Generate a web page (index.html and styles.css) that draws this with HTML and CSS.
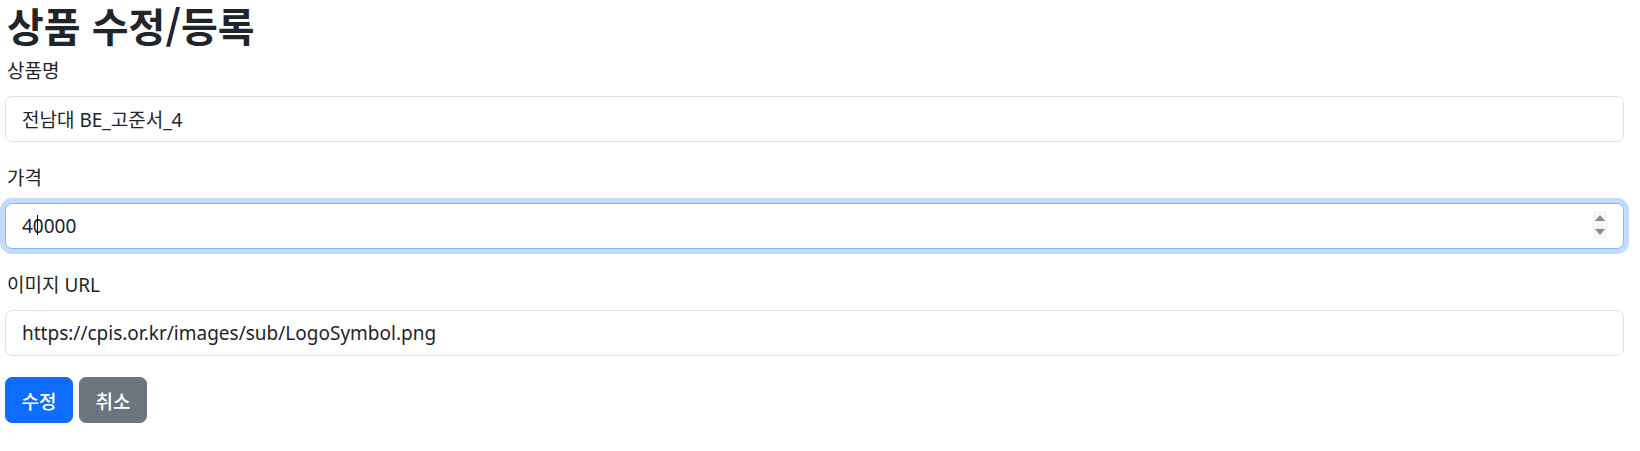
FILE: index.html
```html
<!DOCTYPE html>
<html lang="ko">
<head>
<meta charset="utf-8">
<title>상품 수정/등록</title>
<link rel="stylesheet" href="styles.css">
</head>
<body>
<div class="page">
  <h1 class="title">상품 수정/등록</h1>
  <form class="form">
    <div class="group">
      <label class="label" for="name">상품명</label>
      <input class="control" id="name" type="text" value="전남대 BE_고준서_4">
    </div>
    <div class="group">
      <label class="label" for="price">가격</label>
      <div class="field-wrap">
        <input class="control focused" id="price" type="text" value="40000">
        <span class="caret"></span>
        <span class="spinner">
          <svg width="12" height="28" viewBox="0 0 12 28">
            <polygon points="6,4 11,10 1,10" fill="#8c8c8c"/>
            <polygon points="6,24 11,18 1,18" fill="#8c8c8c"/>
          </svg>
        </span>
      </div>
    </div>
    <div class="group">
      <label class="label" for="img">이미지 URL</label>
      <input class="control" id="img" type="text" value="https://cpis.or.kr/images/sub/LogoSymbol.png">
    </div>
    <div class="actions">
      <button type="button" class="btn btn-primary">수정</button>
      <button type="button" class="btn btn-secondary">취소</button>
    </div>
  </form>
</div>
</body>
</html>
```
FILE: styles.css
```css
* { box-sizing: border-box; }
html, body { margin: 0; padding: 0; background: #fff; }
body {
  font-family: "Noto Sans", "Noto Sans CJK KR", sans-serif;
  color: #212529;
}
.page {
  padding: 0 16px 0 5px;
}
.title {
  margin: 0 0 9px 2px;
  font-size: 40px;
  line-height: 48px;
  height: 48px;
  padding-top: 1px;
  font-weight: 700;
  font-family: "Noto Sans CJK KR", "Noto Sans", sans-serif;
}
.form { display: flex; flex-direction: column; }
.group { display: flex; flex-direction: column; margin-bottom: 22px; }
.label {
  display: block;
  font-size: 19px;
  line-height: 29px;
  margin: 0 0 10px 2px;
}
.field-wrap { position: relative; }
.control {
  display: block;
  width: 100%;
  height: 46px;
  padding: 0 16px;
  font-family: "Noto Sans", "Noto Sans CJK KR", sans-serif;
  font-size: 19px;
  color: #212529;
  background: #fff;
  border: 1px solid #dee2e6;
  border-radius: 7px;
  outline: none;
}
.control.focused {
  border-color: #86b7fe;
  box-shadow: 0 0 0 5px rgba(13, 110, 253, 0.25);
}
.caret {
  position: absolute;
  left: 32px;
  top: 12px;
  width: 1px;
  height: 20px;
  background: #000;
}
.spinner {
  position: absolute;
  right: 17px;
  top: 8px;
  width: 14px;
  height: 28px;
  display: flex;
  align-items: center;
  justify-content: center;
  background: #f6f6f6;
}
.spinner svg { display: block; }
.actions { display: flex; gap: 6px; margin-top: -1px; }
.btn {
  height: 46px;
  width: 68px;
  padding: 0;
  border: 1px solid transparent;
  border-radius: 7px;
  font-family: "Noto Sans CJK KR", "Noto Sans", sans-serif;
  font-size: 19px;
  font-weight: 500;
  color: #fff;
  cursor: pointer;
}
.btn-primary { background: #0d6efd; border-color: #0d6efd; }
.btn-secondary { background: #6c757d; border-color: #6c757d; }
```
